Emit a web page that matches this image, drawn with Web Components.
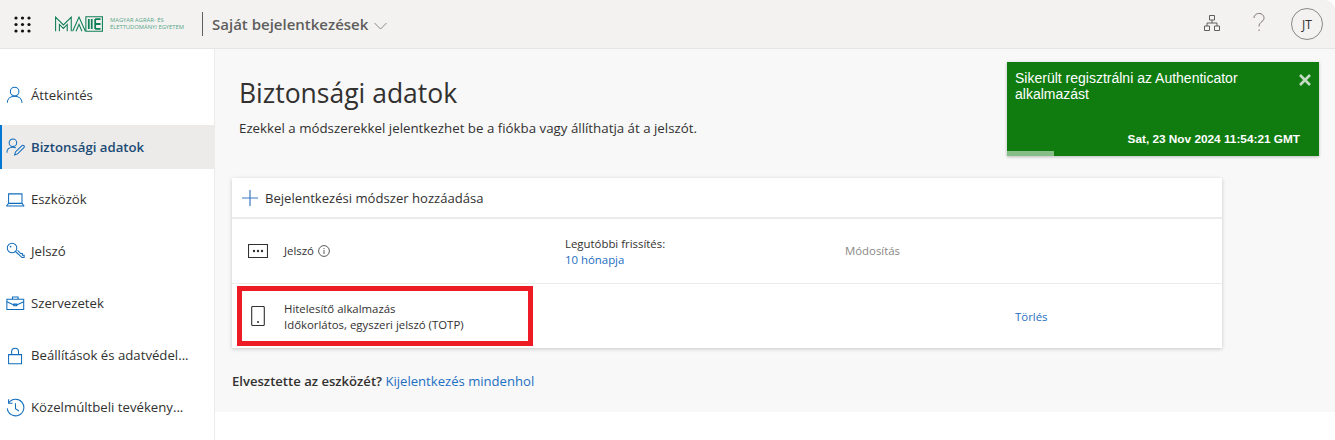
<!DOCTYPE html>
<html lang="hu">
<head>
<meta charset="utf-8">
<title>Biztonsági adatok</title>
<style>
  html, body { margin: 0; height: 100%; background: #fff; overflow: hidden; }
  body { font-family: "Open Sans", "Noto Sans", sans-serif; color: #323130; }
</style>
</head>
<body>
<my-account-app>
  <top-bar slot="top"></top-bar>
  <side-nav slot="nav">
    <nav-item icon="person">Áttekintés</nav-item>
    <nav-item icon="personEdit" active>Biztonsági adatok</nav-item>
    <nav-item icon="laptop">Eszközök</nav-item>
    <nav-item icon="key">Jelszó</nav-item>
    <nav-item icon="case">Szervezetek</nav-item>
    <nav-item icon="lock">Beállítások és adatvédel...</nav-item>
    <nav-item icon="history">Közelmúltbeli tevékeny...</nav-item>
  </side-nav>
  <security-page slot="main"></security-page>
  <toast-note slot="main"></toast-note>
</my-account-app>

<script>
const ICONS = {
  person: `<circle cx="10" cy="6.500" r="5"/><path d="M1.500 19.500c0-4.600 3.400-7.600 8.500-7.600s8.500 3 8.500 7.600"/>`,
  personEdit: `<circle cx="8" cy="5.500" r="4.400"/><path d="M1 17c0-4 3-6.400 7-6.400 1.400 0 2.600.3 3.600.8"/><path d="M10 19.500l1-3.400 7.400-7.200a1.600 1.600 0 0 1 2.300 2.300l-7.300 7.200z"/>`,
  laptop: `<path d="M3 4.500h15.500v11H3z"/><path d="M.5 18.500h20.500"/><path d="M3 15.500L.5 18.500M18.500 15.500l2.500 3"/>`,
  key: `<circle cx="7" cy="7" r="5.500"/><circle cx="5.300" cy="5.300" r="1" fill="currentColor" stroke="none"/><path d="M11 11l7.500 7h2.500v-2.600h-2v-2h-2l-3.600-3.600"/>`,
  case: `<path d="M1 6h19.500v12H1z"/><path d="M7.500 6V3.500h6.500V6"/><path d="M1 9l7.500 3.500h4.500L20.500 9"/><path d="M9 11.500h3.500v2H9z"/>`,
  lock: `<path d="M3 10h15v10.500H3z"/><path d="M6.500 10V6.500a4 4 0 0 1 8 0V10"/>`,
  history: `<path d="M3.200 5.500A9.600 9.600 0 1 1 1.500 12"/><path d="M3 1.500v4.500h4.500"/><path d="M11 6v6.500l4 2.500"/>`
};

class MyAccountApp extends HTMLElement {
  constructor() {
    super();
    this.attachShadow({ mode: "open" });
    this.shadowRoot.innerHTML = `
<style>
:host { display: grid; grid-template-columns: 215px 1fr; grid-template-rows: 49px 363px 28px; height: 440px; }
.top { grid-column: 1 / 3; }
.nav { grid-row: 2 / 4; border-right: 1px solid #edebe9; }
.main { position: relative; background: #f8f8f8; }
</style>
<div class="top"><slot name="top"></slot></div>
<div class="nav"><slot name="nav"></slot></div>
<div class="main"><slot name="main"></slot></div>`;
  }
}

class TopBar extends HTMLElement {
  constructor() {
    super();
    this.attachShadow({ mode: "open" });
    const dots = [];
    for (let y = 0; y < 3; y++) for (let x = 0; x < 3; x++) dots.push(`<circle cx="${2 + x * 6.5}" cy="${2 + y * 6.5}" r="1.6"/>`);
    this.shadowRoot.innerHTML = `
<style>
:host { display: flex; align-items: center; height: 48px; background: #f3f2f1; border-bottom: 1px solid #e6e5e3; border-top-right-radius: 10px; }
svg { display: block; }
.waffle { margin-left: 14px; margin-right: 24px; }
.logo { display: flex; align-items: center; gap: 7px; color: #0f7f55; }
.logo-text { font-size: 5.800px; line-height: 7.500px; color: #57a888; white-space: nowrap; width: 77px; }
.sep { width: 1px; height: 24px; background: #605e5c; margin-left: 15px; margin-right: 9px; }
.title { font-size: 15px; font-weight: 600; color: #605e5c; white-space: nowrap; }
.chev { margin-left: 6px; margin-top: 3px; color: #8a8886; }
.right { margin-left: auto; display: flex; align-items: center; }
.org { color: #605e5c; margin-right: 33px; margin-top: -3px; }
.help { color: #7d7272; margin-right: 26px; margin-top: -3px; }
.avatar { width: 32px; height: 32px; box-sizing: border-box; border: 1px solid #8a8886; border-radius: 50%; display: flex; align-items: center; justify-content: center; font-size: 12px; color: #323130; margin-right: 12px; }
</style>
<svg class="waffle" width="17" height="17" viewBox="0 0 17 17" fill="#111">${dots.join("")}</svg>
<div class="logo">
  <svg width="48" height="16" viewBox="0 0 49 16" fill="none" stroke="currentColor" stroke-width="1.100">
    <path d="M.6 15.400V1l8 8 8-8v14.400M4.500 15.400V8.500l4 4 4-4v6.900"/>
    <path d="M18 15.400L24.500 1l6.500 14.400M21.500 15.400l3-7 3 7"/>
    <path d="M31.500 .6H48.400V15.400H31.500z"/>
    <path d="M34.500 3v10M37.500 3v10M41 3h5.500M41 8h5.500M41 13h5.500M41 3v10" stroke-width="1.800"/>
  </svg>
  <div class="logo-text">MAGYAR AGRÁR- ÉS<br>ÉLETTUDOMÁNYI EGYETEM</div>
</div>
<div class="sep"></div>
<div class="title">Saját bejelentkezések</div>
<svg class="chev" width="13" height="8" viewBox="0 0 13 8" fill="none" stroke="currentColor"><path d="M.5 1l6 6 6-6"/></svg>
<div class="right">
  <svg class="org" width="16" height="16" viewBox="0 0 16 16" fill="none" stroke="currentColor"><path d="M5.500 .5h5v4.500h-5zM.5 11h5v4.500h-5zM10.500 11h5v4.500h-5zM8 5v3M3 11V8h10v3"/></svg>
  <svg class="help" width="12" height="19" viewBox="0 0 12 19" fill="none" stroke="currentColor" stroke-width="1"><path d="M1 5a5 4.500 0 1 1 8 3.500C7 10 6 11 6 13.500M6 16.500v1.500"/></svg>
  <div class="avatar">JT</div>
</div>`;
  }
}

class SideNav extends HTMLElement {
  constructor() {
    super();
    this.attachShadow({ mode: "open" });
    this.shadowRoot.innerHTML = `
<style>
:host { display: flex; flex-direction: column; gap: 8px; padding-top: 24px; }
</style>
<slot></slot>`;
  }
}

class NavItem extends HTMLElement {
  constructor() {
    super();
    this.attachShadow({ mode: "open" });
    const on = this.hasAttribute("active");
    this.shadowRoot.innerHTML = `
<style>
:host { display: flex; align-items: center; height: 44px; box-sizing: border-box; padding-left: 4px; gap: 6px; font-size: 13.200px; color: ${on ? "#1b4a76" : "#323130"}; font-weight: ${on ? 600 : 400}; background: ${on ? "#edebe9" : "transparent"}; border-left: 2px solid ${on ? "#0078d4" : "transparent"}; white-space: nowrap; }
svg { color: #0f6cbd; flex: none; }
</style>
<svg width="19" height="19" viewBox="0 0 22 22" fill="none" stroke="currentColor" stroke-width="1.200">${ICONS[this.getAttribute("icon")]}</svg>
<slot></slot>`;
  }
}

class SecurityPage extends HTMLElement {
  constructor() {
    super();
    this.attachShadow({ mode: "open" });
    this.shadowRoot.innerHTML = `
<style>
:host { display: block; padding: 27px 0 0 17px; width: 990px; }
h1 { margin: 0 0 0 7px; font-size: 26.500px; font-weight: 400; line-height: 34px; color: #323130; }
p { margin: 9px 0 0 7px; font-size: 13.300px; line-height: 18px; color: #323130; }
.card { margin-top: 41px; background: #fff; box-shadow: 0 1px 4px rgba(0,0,0,.2); font-size: 11.400px; }
.add { display: flex; align-items: center; height: 39px; padding-left: 10px; gap: 7px; font-size: 13.100px; border-bottom: 2px solid #edebe9; color: #323130; }
.row { display: grid; grid-template-columns: 52px 281px 280px 1fr; align-items: center; height: 64px; color: #323130; line-height: 16px; }
.row + .row { border-top: 1px solid #edebe9; }
.ic { display: flex; justify-content: center; }
.name { display: flex; align-items: center; gap: 4px; }
.txt { padding-top: 2px; }
a { color: #1b6ec2; text-decoration: none; }
.off { color: #8a8886; }
.lost { margin: 24px 0 0; font-size: 13.100px; line-height: 18px; }
.lost b { font-weight: 600; }
.mark { position: absolute; left: 22px; top: 237px; width: 296px; height: 60px; box-sizing: border-box; border: 5px solid #ed1c24; }
</style>
<h1>Biztonsági adatok</h1>
<p>Ezekkel a módszerekkel jelentkezhet be a fiókba vagy állíthatja át a jelszót.</p>
<div class="card">
  <div class="add">
    <svg width="16" height="16" viewBox="0 0 16 16" stroke="#3b78c2" stroke-width="1.200"><path d="M8 0v16M0 8h16"/></svg>
    Bejelentkezési módszer hozzáadása
  </div>
  <div class="row">
    <div class="ic"><svg width="20" height="14" viewBox="0 0 20 14" fill="none" stroke="#323130" stroke-width="1.100"><path d="M.5.5h19v13H.5z"/><g fill="#323130" stroke="none"><circle cx="6" cy="7" r="1.200"/><circle cx="10" cy="7" r="1.200"/><circle cx="14" cy="7" r="1.200"/></g></svg></div>
    <div class="name">Jelszó <svg width="12" height="12" viewBox="0 0 12 12" fill="none" stroke="#323130" stroke-width=".8"><circle cx="6" cy="6" r="5.400"/><path d="M6 5v4M6 3v1"/></svg></div>
    <div class="txt">Legutóbbi frissítés:<br><a href="#">10 hónapja</a></div>
    <div class="off">Módosítás</div>
  </div>
  <div class="row">
    <div class="ic"><svg width="14" height="20" viewBox="0 0 14 20" fill="none" stroke="#323130" stroke-width="1.100"><rect x=".7" y=".5" width="12.600" height="19" rx="1"/><path d="M6 16h2" stroke-width="1.500"/></svg></div>
    <div class="txt">Hitelesítő alkalmazás<br>Időkorlátos, egyszeri jelszó (TOTP)</div>
    <div></div>
    <div class="txt"><a href="#" style="margin-left:170px">Törlés</a></div>
  </div>
</div>
<div class="lost"><b>Elvesztette az eszközét?</b> <a href="#">Kijelentkezés mindenhol</a></div>
<div class="mark"></div>`;
  }
}

class ToastNote extends HTMLElement {
  constructor() {
    super();
    this.attachShadow({ mode: "open" });
    this.shadowRoot.innerHTML = `
<style>
:host { position: absolute; top: 13px; right: 16px; width: 312px; height: 94px; box-sizing: border-box; background: #107c10; color: #fff; font-family: "Liberation Sans", Arial, sans-serif; box-shadow: 0 1px 3px rgba(0,0,0,.25); display: flex; flex-direction: column; padding: 8px 19px 0 8px; }
.msg { font-size: 14px; line-height: 16px; padding-right: 30px; }
.time { margin-top: auto; padding-bottom: 10px; text-align: right; font-size: 11.800px; font-weight: 700; line-height: 14px; }
.x { position: absolute; top: 12px; right: 8px; color: #c3dcc3; }
.bar { position: absolute; left: 0; bottom: 0; width: 47px; height: 5px; background: #87be87; }
</style>
<div class="msg">Sikerült regisztrálni az Authenticator alkalmazást</div>
<div class="time">Sat, 23 Nov 2024 11:54:21 GMT</div>
<svg class="x" width="12" height="12" viewBox="0 0 12 12" stroke="currentColor" stroke-width="2.600"><path d="M1 1l10 10M11 1L1 11"/></svg>
<div class="bar"></div>`;
  }
}

customElements.define("my-account-app", MyAccountApp);
customElements.define("top-bar", TopBar);
customElements.define("side-nav", SideNav);
customElements.define("nav-item", NavItem);
customElements.define("security-page", SecurityPage);
customElements.define("toast-note", ToastNote);
</script>
</body>
</html>
